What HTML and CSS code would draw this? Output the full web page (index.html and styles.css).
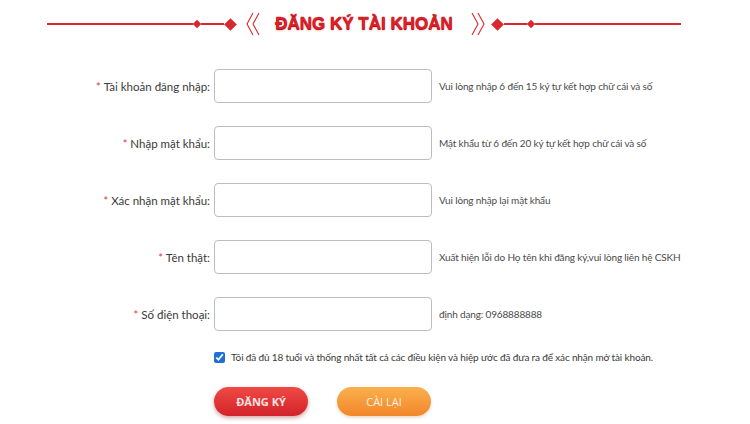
FILE: index.html
```html
<!DOCTYPE html>
<html lang="vi">
<head>
<meta charset="utf-8">
<title>Đăng ký tài khoản</title>
<link rel="stylesheet" href="styles.css">
</head>
<body>
<div class="page">
  <div class="heading">
    <span class="line long"></span>
    <span class="dia small"></span>
    <span class="line short"></span>
    <span class="dia big"></span>
    <svg class="chev left" width="16" height="24" viewBox="0 0 16 24"><polyline points="8,1 2,12 8,23" /><polyline points="14,1 8,12 14,23" /></svg>
    <h1 class="title">ĐĂNG KÝ TÀI KHOẢN</h1>
    <svg class="chev right" width="16" height="24" viewBox="0 0 16 24"><polyline points="2,1 8,12 2,23" /><polyline points="8,1 14,12 8,23" /></svg>
    <span class="dia big"></span>
    <span class="line short"></span>
    <span class="dia small"></span>
    <span class="line long"></span>
  </div>

  <form class="form">
    <div class="grid">
      <label class="label"><span class="req">*</span>Tài khoản đăng nhập:</label>
      <input class="field" type="text">
      <span class="hint">Vui lòng nhập 6 đến 15 ký tự kết hợp chữ cái và số</span>

      <label class="label"><span class="req">*</span>Nhập mật khẩu:</label>
      <input class="field" type="password">
      <span class="hint">Mật khẩu từ 6 đến 20 ký tự kết hợp chữ cái và số</span>

      <label class="label"><span class="req">*</span>Xác nhận mật khẩu:</label>
      <input class="field" type="password">
      <span class="hint">Vui lòng nhập lại mật khẩu</span>

      <label class="label"><span class="req">*</span>Tên thật:</label>
      <input class="field" type="text">
      <span class="hint">Xuất hiện lỗi do Họ tên khi đăng ký,vui lòng liên hệ CSKH</span>

      <label class="label"><span class="req">*</span>Số điện thoại:</label>
      <input class="field" type="text">
      <span class="hint">định dạng: 0968888888</span>
    </div>

    <label class="agree">
      <input class="check" type="checkbox" checked>
      <span>Tôi đã đủ 18 tuổi và thống nhất tất cả các điều kiện và hiệp ước đã đưa ra để xác nhận mở tài khoản.</span>
    </label>

    <div class="actions">
      <button type="button" class="btn btn-red">ĐĂNG KÝ</button>
      <button type="reset" class="btn btn-orange">CÀI LẠI</button>
    </div>
  </form>
</div>
</body>
</html>
```

FILE: styles.css
```css
* { box-sizing: border-box; }

html, body {
  margin: 0;
  padding: 0;
  background: #ffffff;
}

body {
  font-family: Lato, "Open Sans", "Liberation Sans", sans-serif;
  color: #333333;
  width: 750px;
  height: 424px;
  overflow: hidden;
}

.heading {
  height: 48px;
  padding: 0 69px 0 47px;
  display: flex;
  align-items: center;
}

.line {
  height: 2px;
  background: #d9282f;
}

.line.long { flex: 1; }
.line.short { width: 23px; }

.dia {
  background: #d9282f;
  transform: rotate(45deg);
  flex: none;
}

.dia.small { width: 6px; height: 6px; margin: 0 1px; }
.dia.big { width: 9px; height: 9px; margin: 0 2px; }

.chev {
  flex: none;
  fill: none;
  stroke: #d9282f;
  stroke-width: 1.1;
}

.chev.left { margin-left: 8px; margin-right: 14px; }
.chev.right { margin-left: 17px; margin-right: 5px; }

.title {
  margin: 0;
  font-family: "Liberation Sans", Arial, sans-serif;
  font-weight: 900;
  font-size: 17px;
  color: #e0222a;
  letter-spacing: 0;
  text-shadow: 0 1px 0 #b5151b, 0 2px 2px rgba(200, 30, 30, 0.25);
  -webkit-text-stroke: 0.4px #c8161d;
  white-space: nowrap;
}

.form {
  margin-top: 21px;
}

.grid {
  display: grid;
  grid-template-columns: 214px 218px 1fr;
  row-gap: 23px;
  align-items: center;
}

.label {
  text-align: right;
  padding-right: 4px;
  font-size: 11.5px;
  color: #3a3a3a;
  white-space: nowrap;
}

.req {
  color: #e0373a;
  margin-right: 3px;
  font-size: 11px;
}

.field {
  height: 34px;
  width: 218px;
  margin: 0;
  border: 1px solid #bdbdbd;
  border-radius: 4px;
  background: #fff;
  font: inherit;
}

.hint {
  padding-left: 7px;
  font-size: 10px;
  letter-spacing: -0.15px;
  color: #4a4a4a;
  white-space: nowrap;
}

.agree {
  display: flex;
  align-items: center;
  margin: 16px 0 0 214px;
  height: 20px;
  font-size: 10px;
  letter-spacing: -0.15px;
  color: #3a3a3a;
}

.check {
  width: 11px;
  height: 11px;
  margin: 0 6px 0 0;
  accent-color: #1f6fd6;
}

.actions {
  display: flex;
  gap: 29px;
  margin: 20px 0 0 214px;
}

.btn {
  width: 94px;
  height: 29px;
  border: none;
  border-radius: 15px;
  font-family: "Open Sans", "Noto Sans", sans-serif;
  font-size: 11px;
  color: #ffffff;
  cursor: pointer;
}

.btn-red {
  background: linear-gradient(#ef4a45, #d2232a);
  box-shadow: 0 2px 4px rgba(120, 0, 0, 0.35);
  font-weight: 700;
  color: #ffe3e3;
}

.btn-orange {
  background: linear-gradient(#fbb04e, #f2862a);
  box-shadow: 0 2px 3px rgba(160, 90, 0, 0.2);
  color: #fff3e3;
}
```
